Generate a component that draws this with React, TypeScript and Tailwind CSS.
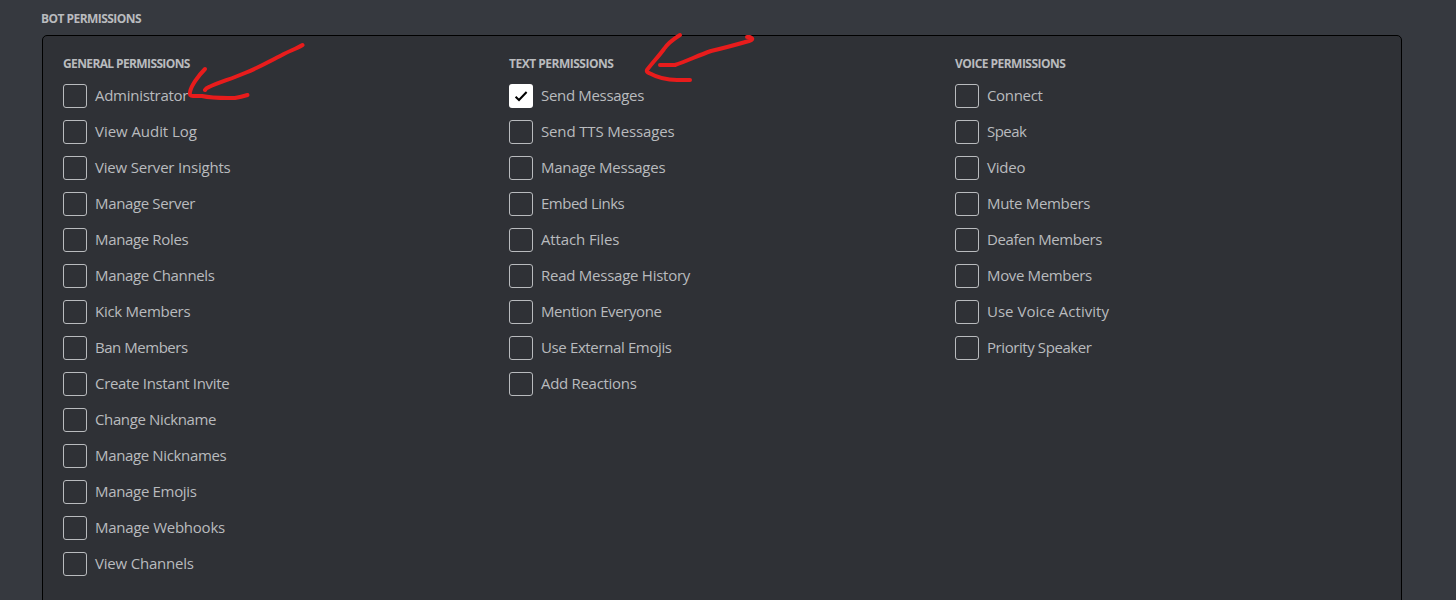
import { useState } from "react";

type Permission = { label: string; tracking: string };
type Group = { title: string; titleTracking: string; items: Permission[] };

const item = (label: string, tracking: string): Permission => ({ label, tracking });

const groups: Group[] = [
  {
    title: "General Permissions",
    titleTracking: "tracking-[-0.62px]",
    items: [
      item("Administrator", "tracking-[-0.28px]"),
      item("View Audit Log", "tracking-[-0.05px]"),
      item("View Server Insights", "tracking-[-0.2px]"),
      item("Manage Server", "tracking-[-0.35px]"),
      item("Manage Roles", "tracking-[-0.35px]"),
      item("Manage Channels", "tracking-[-0.33px]"),
      item("Kick Members", "tracking-[-0.28px]"),
      item("Ban Members", "tracking-[-0.47px]"),
      item("Create Instant Invite", "tracking-[-0.32px]"),
      item("Change Nickname", "tracking-[-0.37px]"),
      item("Manage Nicknames", "tracking-[-0.35px]"),
      item("Manage Emojis", "tracking-[-0.32px]"),
      item("Manage Webhooks", "tracking-[-0.24px]"),
      item("View Channels", "tracking-[-0.2px]"),
    ],
  },
  {
    title: "Text Permissions",
    titleTracking: "tracking-[-0.5px]",
    items: [
      item("Send Messages", "tracking-[-0.32px]"),
      item("Send TTS Messages", "tracking-[-0.14px]"),
      item("Manage Messages", "tracking-[-0.25px]"),
      item("Embed Links", "tracking-[-0.5px]"),
      item("Attach Files", "tracking-[-0.12px]"),
      item("Read Message History", "tracking-[-0.25px]"),
      item("Mention Everyone", "tracking-[-0.4px]"),
      item("Use External Emojis", "tracking-[-0.37px]"),
      item("Add Reactions", "tracking-[-0.3px]"),
    ],
  },
  {
    title: "Voice Permissions",
    titleTracking: "tracking-[-0.54px]",
    items: [
      item("Connect", "tracking-[-0.33px]"),
      item("Speak", "tracking-[-0.55px]"),
      item("Video", "tracking-[-0.2px]"),
      item("Mute Members", "tracking-[-0.32px]"),
      item("Deafen Members", "tracking-[-0.42px]"),
      item("Move Members", "tracking-[-0.35px]"),
      item("Use Voice Activity", "tracking-[0.02px]"),
      item("Priority Speaker", "tracking-[-0.42px]"),
    ],
  },
];

function Check() {
  return (
    <svg width="18" height="18" viewBox="0 0 18 18" fill="none" aria-hidden="true">
      <path d="M3.6 9.8 7 13 14.6 5" stroke="#000" strokeWidth="2" />
    </svg>
  );
}

function PermissionRow({ permission, checked, onToggle }: { permission: Permission; checked: boolean; onToggle: () => void }) {
  return (
    <button type="button" role="checkbox" aria-checked={checked} onClick={onToggle} className="flex h-6 items-start gap-2 text-left">
      <span
        className={
          checked
            ? "flex size-6 shrink-0 items-center justify-center rounded-[3px] bg-white"
            : "size-6 shrink-0 rounded-[3px] border border-[#b9bbbe]"
        }
      >
        {checked && <Check />}
      </span>
      <span className={`whitespace-nowrap text-[15px] leading-[22px] text-[#b9bbbe] ${permission.tracking}`}>{permission.label}</span>
    </button>
  );
}

function Arrows() {
  return (
    <svg className="pointer-events-none absolute left-0 top-0" width="1456" height="600" viewBox="0 0 1456 600" fill="none" stroke="#e81c1c" strokeWidth="4" strokeLinecap="round" strokeLinejoin="round" aria-hidden="true">
      <path d="M302.5 45C296 49 289 51 282 55C268 62 258 68 245 73C231 79 220 82 209 87Q206 88 205 90" />
      <path d="M205 69C198 76 191 86 190 92Q189 96 193 96H202C213 98.500 224 98 235 98Q241 97 247.500 95" />
      <path d="M747 37H750Q755 39 749 41C735 45 724 48 711 51C697 56 687 61 675 65H660" />
      <path d="M680 35C672 40 668 43 664 49C659 56 653 62 647 70Q646 72 649 73C660 79 670 80 677 80H690" />
    </svg>
  );
}

export default function App() {
  const [selected, setSelected] = useState<string[]>(["Send Messages"]);
  const toggle = (label: string) =>
    setSelected((current) => (current.includes(label) ? current.filter((x) => x !== label) : [...current, label]));

  return (
    <main className="relative h-[600px] w-[1456px] overflow-hidden bg-[#36393f] px-[42px] pt-[11px] font-['Open_Sans','Noto_Sans',sans-serif]">
      <h2 className="-ml-px text-[12px] leading-4 font-bold tracking-[-0.55px] text-[#b9bbbe] uppercase">Bot Permissions</h2>
      <section className="mt-2 grid h-[620px] w-[1360px] grid-cols-3 gap-5 rounded-[5px] border border-black bg-[#2f3136] px-5 pt-5">
        {groups.map((group) => (
          <div key={group.title}>
            <h3 className={`text-[12px] leading-4 font-bold text-[#b9bbbe] uppercase ${group.titleTracking}`}>{group.title}</h3>
            <div className="mt-3 flex flex-col items-start gap-3">
              {group.items.map((permission) => (
                <PermissionRow
                  key={permission.label}
                  permission={permission}
                  checked={selected.includes(permission.label)}
                  onToggle={() => toggle(permission.label)}
                />
              ))}
            </div>
          </div>
        ))}
      </section>
      <Arrows />
    </main>
  );
}
